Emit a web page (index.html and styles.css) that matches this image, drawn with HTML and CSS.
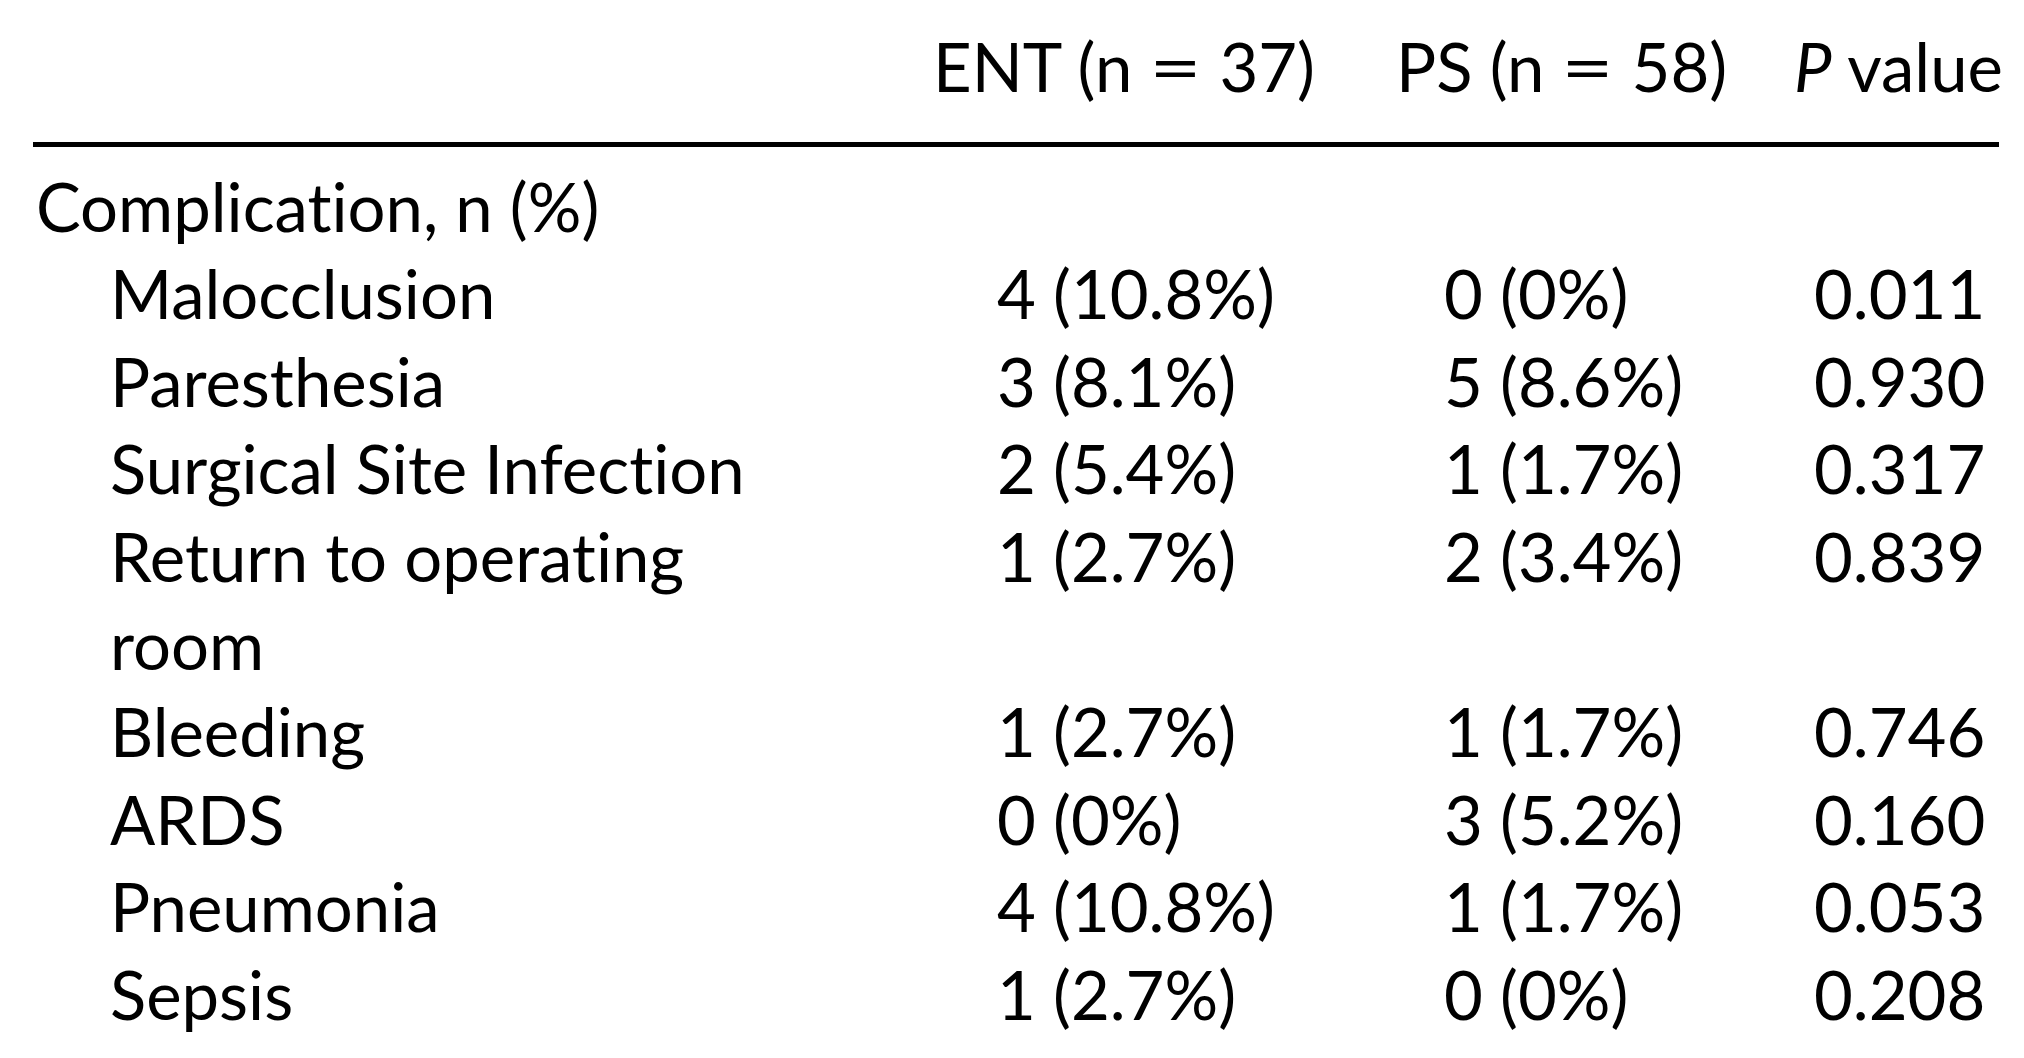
FILE: index.html
```html
<!DOCTYPE html>
<html lang="en">
<head>
<meta charset="utf-8">
<title>Complications</title>
<link rel="stylesheet" href="styles.css">
</head>
<body>
<div class="table">
  <div class="row head">
    <div class="cell label"></div>
    <div class="cell">ENT (n<span class="eq">=</span>37)</div>
    <div class="cell">PS (n<span class="eq">=</span>58)</div>
    <div class="cell"><i>P</i> value</div>
  </div>
  <div class="body">
    <div class="row">
      <div class="cell label">Complication, n (%)</div>
      <div class="cell"></div><div class="cell"></div><div class="cell"></div>
    </div>
    <div class="row">
      <div class="cell label sub">Malocclusion</div>
      <div class="cell v2">4 (10.8%)</div><div class="cell v3">0 (0%)</div><div class="cell v4">0.011</div>
    </div>
    <div class="row">
      <div class="cell label sub">Paresthesia</div>
      <div class="cell v2">3 (8.1%)</div><div class="cell v3">5 (8.6%)</div><div class="cell v4">0.930</div>
    </div>
    <div class="row">
      <div class="cell label sub">Surgical Site Infection</div>
      <div class="cell v2">2 (5.4%)</div><div class="cell v3">1 (1.7%)</div><div class="cell v4">0.317</div>
    </div>
    <div class="row">
      <div class="cell label sub">Return to operating<br>room</div>
      <div class="cell v2">1 (2.7%)</div><div class="cell v3">2 (3.4%)</div><div class="cell v4">0.839</div>
    </div>
    <div class="row">
      <div class="cell label sub">Bleeding</div>
      <div class="cell v2">1 (2.7%)</div><div class="cell v3">1 (1.7%)</div><div class="cell v4">0.746</div>
    </div>
    <div class="row">
      <div class="cell label sub">ARDS</div>
      <div class="cell v2">0 (0%)</div><div class="cell v3">3 (5.2%)</div><div class="cell v4">0.160</div>
    </div>
    <div class="row">
      <div class="cell label sub">Pneumonia</div>
      <div class="cell v2">4 (10.8%)</div><div class="cell v3">1 (1.7%)</div><div class="cell v4">0.053</div>
    </div>
    <div class="row">
      <div class="cell label sub">Sepsis</div>
      <div class="cell v2">1 (2.7%)</div><div class="cell v3">0 (0%)</div><div class="cell v4">0.208</div>
    </div>
  </div>
</div>
</body>
</html>
```

FILE: styles.css
```css
html, body {
  margin: 0;
  padding: 0;
  background: #ffffff;
}
body {
  font-family: Lato, "Open Sans", sans-serif;
  font-size: 67px;
  line-height: 87.6px;
  color: #000000;
  font-variant-ligatures: none;
  font-feature-settings: "liga" 0, "clig" 0;
}
.table {
  margin-left: 33px;
  width: 1966px;
}
.row {
  display: grid;
  grid-template-columns: 900px 463px 398px 205px;
}
.cell {
  white-space: nowrap;
}
.head {
  padding-top: 23px;
  padding-bottom: 31px;
  border-bottom: 5px solid #000000;
}
.eq {
  display: inline-block;
  padding: 0 0.36em;
  transform: scaleX(1.35);
}
.body {
  padding-top: 16px;
}
.label {
  padding-left: 3px;
}
.label.sub {
  padding-left: 77px;
}
.v2 { padding-left: 64px; }
.v3 { padding-left: 48px; }
.v4 { padding-left: 20px; }
i { font-style: italic; }
```
